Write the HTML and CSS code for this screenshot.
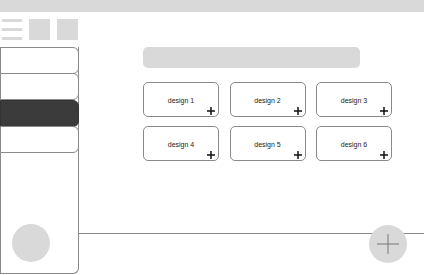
FILE: index.html
```html
<!DOCTYPE html>
<html>
<head>
<meta charset="utf-8">
<link rel="stylesheet" href="styles.css">
</head>
<body>
<div class="topbar"></div>
<div class="toolbar">
  <div class="burger"><span></span><span></span><span></span></div>
  <div class="sq"></div>
  <div class="sq"></div>
</div>
<div class="main">
  <div class="sidebar">
    <div class="item"></div>
    <div class="item"></div>
    <div class="item active"></div>
    <div class="item"></div>
    <div class="avatar"></div>
  </div>
  <div class="content">
    <div class="search"></div>
    <div class="grid">
      <div class="card">design 1<svg class="plus" viewBox="0 0 8 8"><path d="M4 0V8M0 4H8"/></svg></div>
      <div class="card">design 2<svg class="plus" viewBox="0 0 8 8"><path d="M4 0V8M0 4H8"/></svg></div>
      <div class="card">design 3<svg class="plus" viewBox="0 0 8 8"><path d="M4 0V8M0 4H8"/></svg></div>
      <div class="card">design 4<svg class="plus" viewBox="0 0 8 8"><path d="M4 0V8M0 4H8"/></svg></div>
      <div class="card">design 5<svg class="plus" viewBox="0 0 8 8"><path d="M4 0V8M0 4H8"/></svg></div>
      <div class="card">design 6<svg class="plus" viewBox="0 0 8 8"><path d="M4 0V8M0 4H8"/></svg></div>
    </div>
    <div class="bottomline"></div>
    <div class="fab"><svg viewBox="0 0 22 20"><path d="M11 0V20M0 10H22"/></svg></div>
  </div>
</div>
</body>
</html>
```

FILE: styles.css
```css
* { box-sizing: border-box; }
html, body { margin: 0; padding: 0; background: #fff; width: 424px; height: 275px; overflow: hidden; font-family: "Liberation Sans", Arial, sans-serif; }
.topbar { height: 12px; background: #d9d9d9; }
.toolbar { display: flex; align-items: flex-start; padding: 7px 0 0 2px; height: 35px; }
.burger { display: flex; flex-direction: column; gap: 6px; width: 20px; padding-top: 0; margin-right: 7px; }
.burger span { display: block; height: 3px; background: #d9d9d9; }
.sq { width: 21px; height: 21px; background: #d9d9d9; margin-right: 7px; }
.main { display: flex; height: 228px; }
.sidebar { position: relative; width: 79px; height: 227px; border: 1px solid #8a8a8a; border-top: none; border-radius: 0 0 6px 0; flex-shrink: 0; }
.item { height: 27px; margin-top: -1px; margin-left: -1px; width: 79px; border: 1px solid #8a8a8a; border-radius: 0 6px 6px 0; background: #fff; }
.item:first-child { margin-top: 0; }
.item.active { background: #3b3b3b; border-color: #333; margin-top: 0; }
.avatar { position: absolute; left: 11px; top: 177px; width: 38px; height: 38px; border-radius: 50%; background: #d9d9d9; }
.content { position: relative; flex: 1; display: flex; flex-direction: column; padding-left: 64px; }
.search { width: 217px; height: 21px; background: #d9d9d9; border-radius: 5px; }
.grid { display: grid; grid-template-columns: repeat(3, 76px); column-gap: 10.5px; row-gap: 9px; margin-top: 14px; }
.card { position: relative; height: 35px; border: 1px solid #8a8a8a; border-radius: 5px; display: flex; align-items: center; justify-content: center; font-size: 7px; color: #222; padding-top: 1px; }
.plus { position: absolute; right: 3px; bottom: 1px; width: 8px; height: 8px; }
.plus path { stroke: #111; stroke-width: 1.5; fill: none; }
.bottomline { position: absolute; left: 0; right: 0; top: 186px; border-top: 1px solid #8a8a8a; }
.fab { position: absolute; left: 290px; top: 178px; width: 38px; height: 38px; border-radius: 50%; background: #d9d9d9; display: flex; align-items: center; justify-content: center; }
.fab svg { width: 22px; height: 20px; }
.fab path { stroke: #777; stroke-width: 1; fill: none; }
```
